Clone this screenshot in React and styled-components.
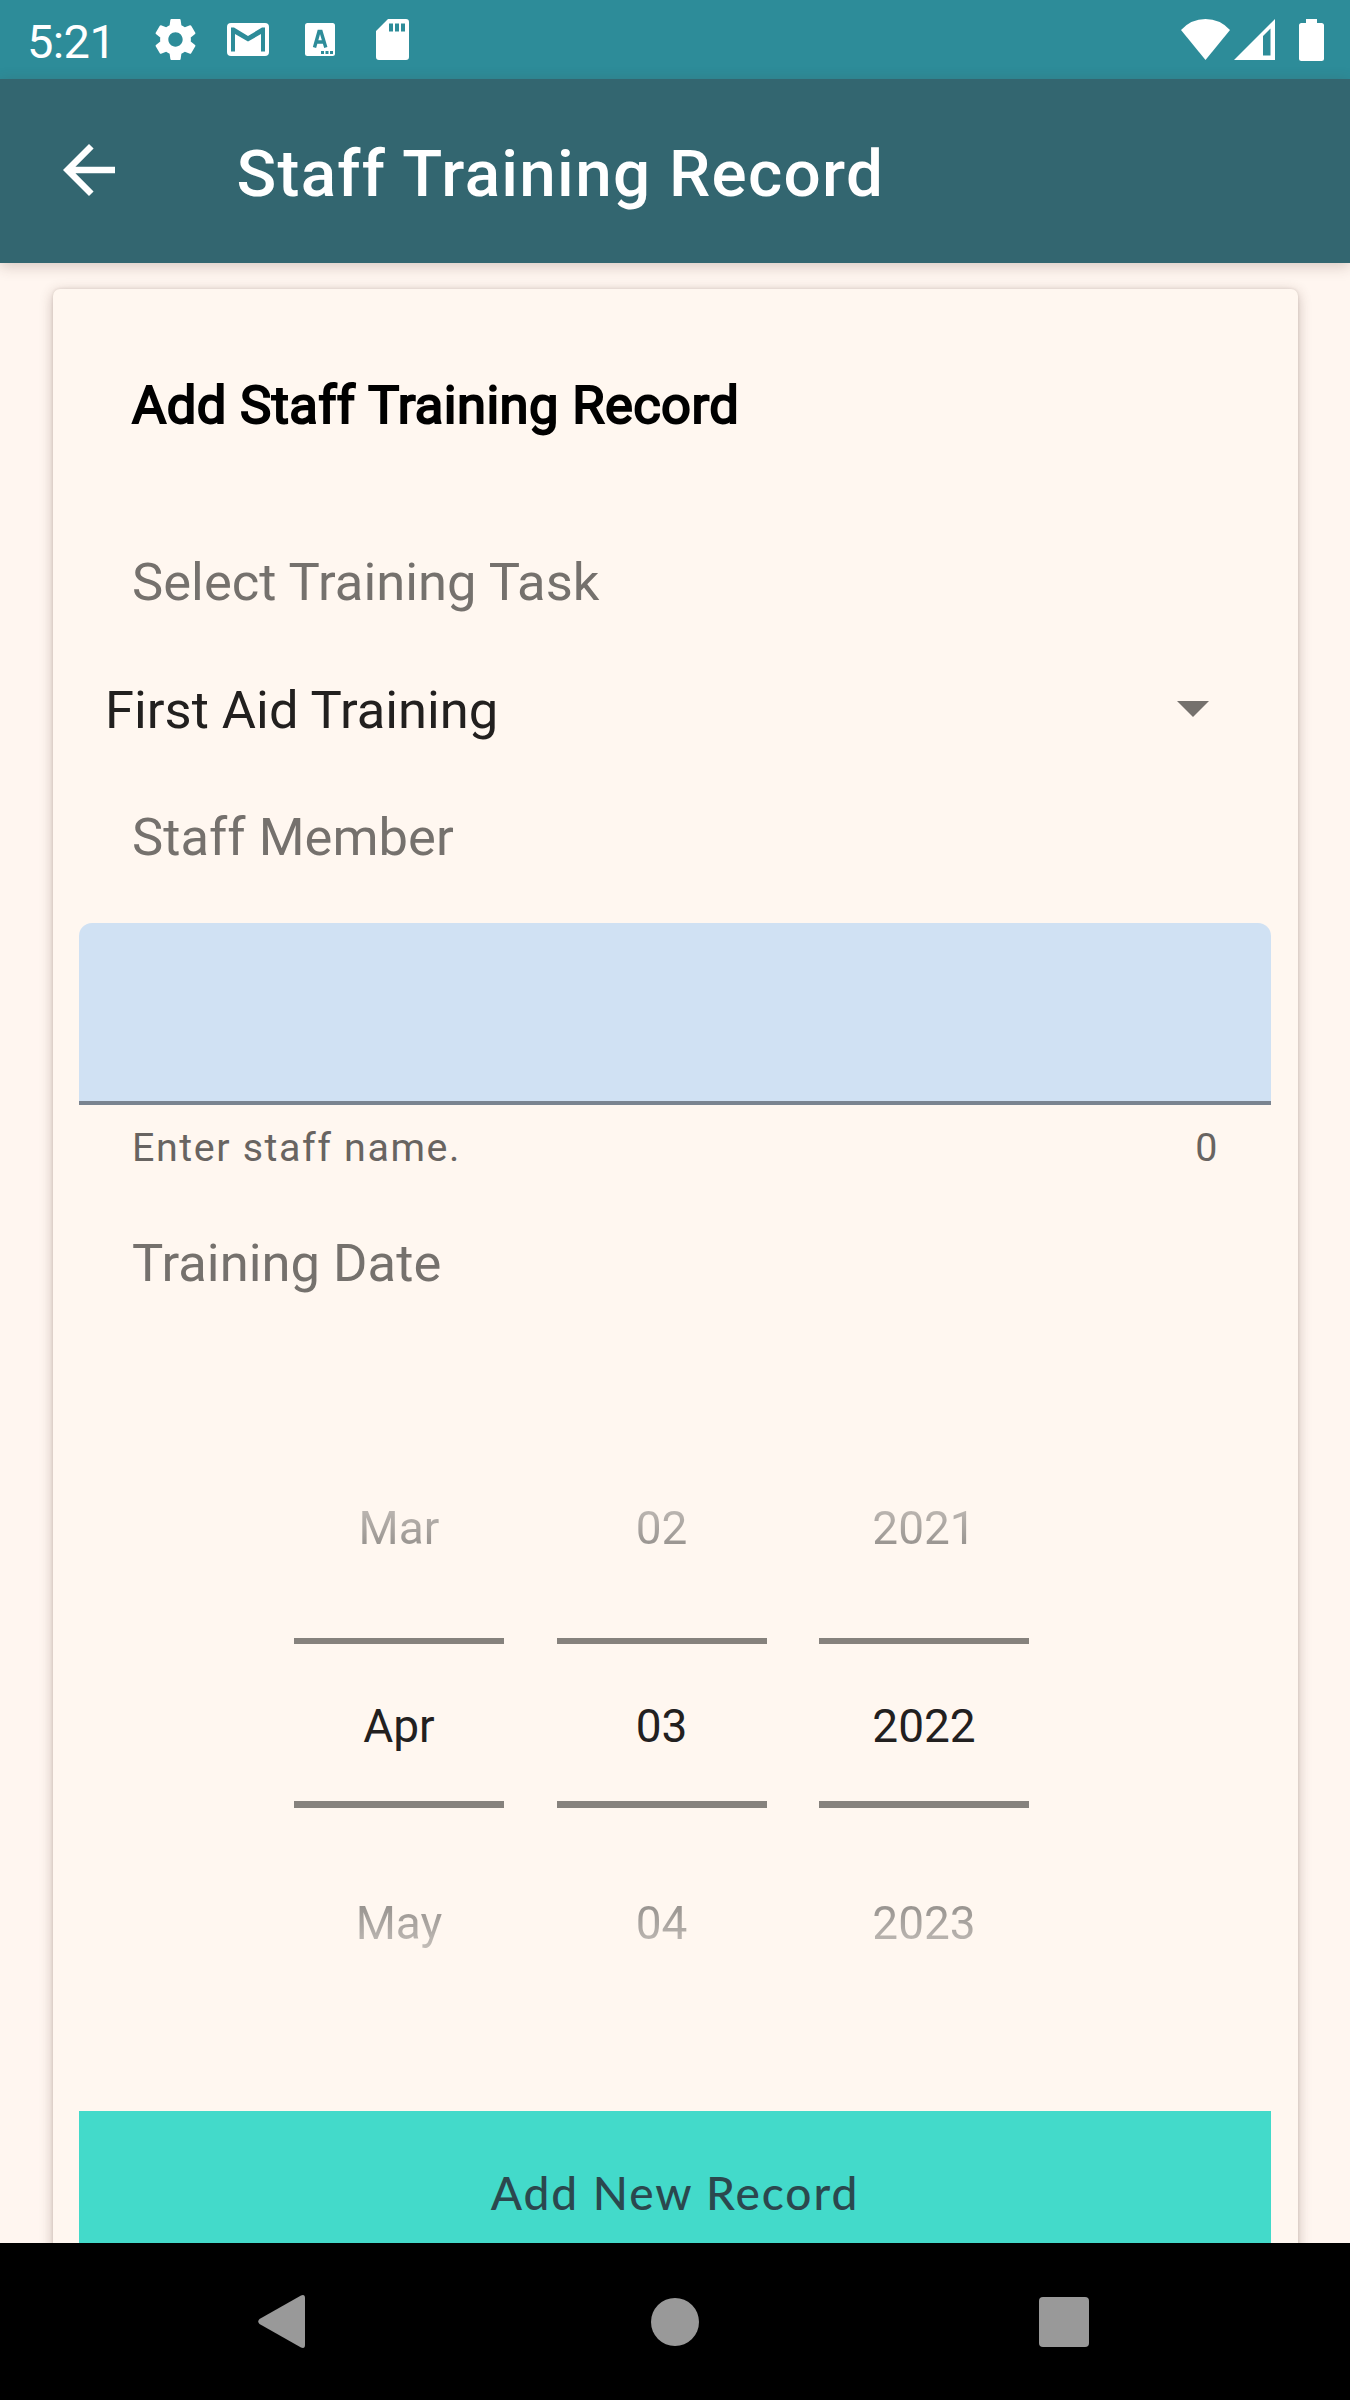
import React from "react";
import styled, { createGlobalStyle } from "styled-components";

const Global = createGlobalStyle`
  * { box-sizing: border-box; }
  body { margin: 0; background: #fff6f0; font-family: Roboto, "Liberation Sans", sans-serif; }
`;

const Screen = styled.div`
  display: flex;
  flex-direction: column;
  width: 1350px;
  height: 2400px;
  overflow: hidden;
  background: #fff6f0;
`;

const StatusBar = styled.header`
  display: flex;
  align-items: center;
  justify-content: space-between;
  flex: none;
  height: 79px;
  padding: 0 26px 0 27px;
  background: #2d8c99;
  color: #fff;
`;

const StatusGroup = styled.div`
  display: flex;
  align-items: center;
`;

const Clock = styled.span`
  width: 118px;
  font-size: 47px;
  line-height: 55px;
  padding-top: 4px;
  letter-spacing: -0.6px;
`;

const Glyph = styled.svg`
  display: block;
  flex: none;
  width: ${(p) => p.$w}px;
  height: ${(p) => p.$h}px;
  margin-left: ${(p) => p.$gap || 0}px;
  fill: currentColor;
`;

const AppBar = styled.div`
  display: flex;
  align-items: center;
  flex: none;
  height: 184px;
  padding-left: 50px;
  background: #336670;
  color: #fff;
  box-shadow: 0 3px 14px rgba(80, 50, 40, 0.24);
`;

const BackButton = styled.button`
  display: flex;
  padding: 0;
  border: 0;
  background: none;
  color: #fff;
  margin: -3px 108.5px 0 0;
`;

const Title = styled.h1`
  margin: 0;
  padding-top: 5px;
  font-size: 65.6px;
  font-weight: 500;
  line-height: 76px;
  letter-spacing: 1.3px;
`;

const Content = styled.main`
  flex: 1;
  min-height: 0;
  overflow: hidden;
  padding: 26px 52px 0 53px;
`;

const Card = styled.section`
  display: flex;
  flex-direction: column;
  height: 2100px;
  padding: 0 27px 0 26px;
  border-radius: 7px;
  background: #fff7f0;
  box-shadow: 0 3px 13px rgba(80, 50, 40, 0.3), 0 0 3px rgba(80, 50, 40, 0.14);
`;

const Heading = styled.h2`
  margin: 85px 53px 0;
  height: 62px;
  font-size: 52.5px;
  font-weight: 400;
  line-height: 62px;
  color: #000;
  -webkit-text-stroke: 2px #000;
  letter-spacing: 0.4px;
`;

const Label = styled.label`
  flex: none;
  height: 62px;
  margin: ${(p) => p.$top}px 52px 0 53px;
  font-size: 52.5px;
  line-height: 62px;
  color: #75716d;
  letter-spacing: 0.04px;
`;

const Spinner = styled.div`
  display: flex;
  align-items: center;
  justify-content: space-between;
  height: 62px;
  margin-top: 66px;
  padding: 0 62px 0 26px;
  font-size: 52.5px;
  line-height: 62px;
  color: #22201f;
`;

const Caret = styled.span`
  width: 0;
  height: 0;
  margin-top: -3px;
  border: 16px solid transparent;
  border-top-color: #75716d;
  border-bottom: 0;
`;

const Field = styled.input`
  display: block;
  flex: none;
  width: 100%;
  height: 182px;
  margin-top: 55px;
  padding: 0 52px;
  border: 0;
  border-bottom: 4px solid #7a8490;
  border-radius: 13px 13px 0 0;
  background: #d0e1f3;
  font: 52.5px Roboto, sans-serif;
  outline: none;
`;

const HelperRow = styled.div`
  display: flex;
  justify-content: space-between;
  margin-top: 20px;
  padding: 0 52px 0 53px;
  font-size: 39.4px;
  line-height: 46px;
  color: #686461;
  letter-spacing: 1.6px;
`;

const DatePicker = styled.div`
  display: flex;
  gap: 52.5px;
  margin: 207px 0 0 215px;
`;

const Wheel = styled.div`
  display: flex;
  flex-direction: column;
  width: 210px;
  text-align: center;
  font-size: 46px;
  line-height: 54px;
`;

const Choice = styled.div`
  height: 54px;
  color: transparent;
  background: linear-gradient(${(p) => p.$dir}, #c4beb9 0%, #8f8b87 100%);
  -webkit-background-clip: text;
  background-clip: text;
`;

const Selected = styled.div`
  display: flex;
  align-items: center;
  justify-content: center;
  height: 170px;
  margin: 83px 0 88px;
  padding-top: 6px;
  border-top: 6px solid #86827d;
  border-bottom: 7px solid #86827d;
  color: #22201f;
`;

const SubmitButton = styled.button`
  flex: none;
  height: 164px;
  margin: 161px 0 0;
  padding: 0;
  border: 0;
  background: #43dacA;
  color: #2b484e;
  font: 500 46px/60px Lato, sans-serif;
  letter-spacing: 1.95px;
`;

const NavBar = styled.nav`
  display: flex;
  align-items: center;
  justify-content: space-between;
  flex: none;
  position: relative;
  height: 157px;
  padding: 0 261px 0 258px;
  background: #000;
  color: #999;
`;

const wheels = [
  ["Mar", "Apr", "May"],
  ["02", "03", "04"],
  ["2021", "2022", "2023"],
];

export default function App() {
  return (
    <Screen>
      <Global />
      <StatusBar>
        <StatusGroup>
          <Clock>5:21</Clock>
          <Glyph $w={41} $h={41} $gap={9.5} viewBox="2.1 2 19.8 20">
            <path d="M19.43 12.98c.04-.32.07-.64.07-.98s-.03-.66-.07-.98l2.11-1.65c.19-.15.24-.42.12-.64l-2-3.46c-.12-.22-.39-.3-.61-.22l-2.49 1c-.52-.4-1.08-.73-1.69-.98l-.38-2.65C14.46 2.18 14.25 2 14 2h-4c-.25 0-.46.18-.49.42l-.38 2.65c-.61.25-1.17.59-1.69.98l-2.49-1c-.23-.09-.49 0-.61.22l-2 3.46c-.13.22-.07.49.12.64l2.11 1.65c-.04.32-.07.65-.07.98s.03.66.07.98l-2.11 1.65c-.19.15-.24.42-.12.64l2 3.46c.12.22.39.3.61.22l2.49-1c.52.4 1.08.73 1.69.98l.38 2.65c.03.24.24.42.49.42h4c.25 0 .46-.18.49-.42l.38-2.65c.61-.25 1.17-.59 1.69-.98l2.49 1c.23.09.49 0 .61-.22l2-3.46c.12-.22.07-.49-.12-.64l-2.11-1.65zM12 15.5c-1.93 0-3.5-1.57-3.5-3.5s1.57-3.5 3.5-3.5 3.5 1.57 3.5 3.5-1.57 3.5-3.5 3.5z" />
          </Glyph>
          <Glyph $w={42} $h={33} $gap={31} viewBox="0 0 42 33">
            <rect width="42" height="33" rx="4" />
            <path d="M4 28.5V4.5H7L21 13 35 4.5H38V28.5H34V11L21 18.5 8 11V28.5Z" fill="#2d8c99" />
          </Glyph>
          <Glyph $w={30} $h={33} $gap={36.5} viewBox="0 0 30 33">
            <rect width="30" height="33" rx="2.5" />
            <path d="M9.5 24.5 14 8.500h2L20.800 24.500M11 19h8.500" fill="none" stroke="#2d8c99" strokeWidth="3.400" />
            <path d="M16 28h3v3h-3zM20.500 28h3v3h-3zM25 28h3v3h-3z" fill="#2d8c99" />
          </Glyph>
          <Glyph $w={33} $h={41} $gap={41} viewBox="0 0 33 41">
            <path fillRule="evenodd" d="M12 0H30Q33 0 33 3V38Q33 41 30 41H3Q0 41 0 38V12ZM13 4.500V12.500H17V4.500ZM19 4.500V12.500H23V4.500ZM25 4.500V12.500H29V4.500Z" />
          </Glyph>
        </StatusGroup>
        <StatusGroup>
          <Glyph $w={49} $h={41} viewBox="0 0 49 41">
            <path d="M0 11Q10 0 24.500 0T49 11L24.500 41Z" />
          </Glyph>
          <Glyph $w={41} $h={41} $gap={4} viewBox="0 0 41 41">
            <path fillRule="evenodd" d="M0 41 41 0V41ZM29 17V36.500H36.500V9.500Z" />
          </Glyph>
          <Glyph $w={25} $h={42} $gap={24} viewBox="0 0 25 42">
            <path d="M7 0H18V4H22.500Q25 4 25 6.500V39.500Q25 42 22.500 42H2.500Q0 42 0 39.500V6.500Q0 4 2.500 4H7Z" />
          </Glyph>
        </StatusGroup>
      </StatusBar>
      <AppBar>
        <BackButton aria-label="Back">
          <Glyph $w={78} $h={78} viewBox="0 0 24 24">
            <path d="M20 11H7.830l5.590-5.590L12 4l-8 8 8 8 1.410-1.410L7.830 13H20v-2z" />
          </Glyph>
        </BackButton>
        <Title>Staff Training Record</Title>
      </AppBar>
      <Content>
        <Card>
          <Heading>Add Staff Training Record</Heading>
          <Label $top={115}>Select Training Task</Label>
          <Spinner>
            First Aid Training
            <Caret />
          </Spinner>
          <Label $top={65}>Staff Member</Label>
          <Field aria-label="Staff name" />
          <HelperRow>
            <span>Enter staff name.</span>
            <span>0</span>
          </HelperRow>
          <Label $top={61}>Training Date</Label>
          <DatePicker>
            {wheels.map(([before, current, after]) => (
              <Wheel key={current}>
                <Choice $dir="to bottom">{before}</Choice>
                <Selected>{current}</Selected>
                <Choice $dir="to top">{after}</Choice>
              </Wheel>
            ))}
          </DatePicker>
          <SubmitButton>Add New Record</SubmitButton>
        </Card>
      </Content>
      <NavBar>
        <Glyph $w={47} $h={53} viewBox="0 0 47 53">
          <path d="M1.500 24Q-1 26.500 1.500 29L43 52.500Q47 54 47 50V3Q47-1 43 .500Z" />
        </Glyph>
        <Glyph $w={48} $h={48} $gap={6} viewBox="0 0 48 48">
          <circle cx="24" cy="24" r="24" />
        </Glyph>
        <Glyph $w={50} $h={50} viewBox="0 0 50 50">
          <rect width="50" height="50" rx="4" />
        </Glyph>
      </NavBar>
    </Screen>
  );
}
